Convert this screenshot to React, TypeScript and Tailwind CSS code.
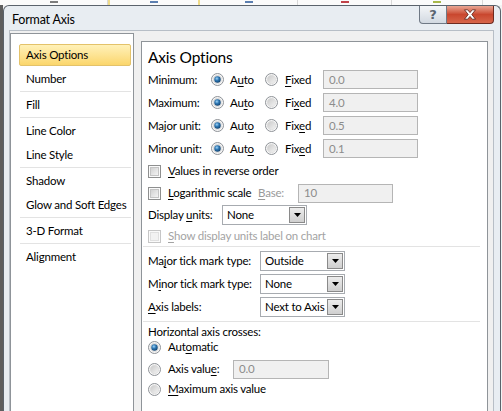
import React from 'react';

// Access key underline
const U: React.FC<{ children: React.ReactNode }> = ({ children }) => (
  <span className="underline underline-offset-[2px] decoration-[1px]">{children}</span>
);

const Radio: React.FC<{ checked?: boolean }> = ({ checked }) => (
  <svg width="13" height="13" viewBox="0 0 13 13" className="shrink-0">
    <defs>
      <linearGradient id="rOff" x1="0" y1="0" x2="1" y2="1">
        <stop offset="0" stopColor="#c9c9c9" />
        <stop offset="1" stopColor="#f4f4f4" />
      </linearGradient>
      <radialGradient id="rDot" cx="0.4" cy="0.35" r="0.7">
        <stop offset="0" stopColor="#9fd4f7" />
        <stop offset="0.45" stopColor="#2f78b4" />
        <stop offset="1" stopColor="#0f3e6a" />
      </radialGradient>
    </defs>
    <circle cx="6.5" cy="6.5" r="6" fill="#f7f7f7" stroke="#8e9297" strokeWidth="1" />
    <circle cx="6.5" cy="6.5" r="4.2" fill="url(#rOff)" stroke="#d6d6d6" strokeWidth="0.6" />
    {checked && <circle cx="6.5" cy="6.5" r="3.2" fill="url(#rDot)" />}
  </svg>
);

const Check: React.FC<{ disabled?: boolean }> = ({ disabled }) => (
  <svg width="13" height="13" viewBox="0 0 13 13" className="shrink-0">
    <defs>
      <linearGradient id="cIn" x1="0" y1="0" x2="1" y2="1">
        <stop offset="0" stopColor="#cfcfcf" />
        <stop offset="1" stopColor="#f6f6f6" />
      </linearGradient>
    </defs>
    <rect x="0.5" y="0.5" width="12" height="12" fill="#fafafa" stroke={disabled ? '#c6c6c6' : '#8e8f8f'} />
    <rect x="2.5" y="2.5" width="8" height="8" fill={disabled ? '#f2f2f2' : 'url(#cIn)'} stroke={disabled ? '#e0e0e0' : '#c4c4c4'} />
  </svg>
);

const Field: React.FC<{ value: string; w: string }> = ({ value, w }) => (
  <div className={`${w} shrink-0 h-[19px] border border-[#b5b5b5] bg-[#f0f0f0] text-[#8c8c8c] pl-[5px] flex items-center`}>
    {value}
  </div>
);

const Select: React.FC<{ value: string }> = ({ value }) => (
  <div className="w-[85px] shrink-0 h-[20px] border border-[#a7abb0] bg-white flex items-center">
    <span className="pl-[4px] flex-1 whitespace-nowrap">{value}</span>
    <div className="w-[16px] h-[16px] mr-[1px] shrink-0 border border-[#8a8a8a] bg-gradient-to-b from-[#ececec] to-[#cfcfcf] flex items-center justify-center">
      <svg width="7" height="4" viewBox="0 0 7 4">
        <path d="M0 0h7L3.5 4z" fill="#000" />
      </svg>
    </div>
  </div>
);

const navGroups: string[][] = [
  ['Axis Options', 'Number'],
  ['Fill'],
  ['Line Color', 'Line Style'],
  ['Shadow', 'Glow and Soft Edges'],
  ['3-D Format'],
  ['Alignment'],
];

const axisRows = [
  { label: 'Minimum:', auto: ['A', 'u', 'to'], fixed: ['', 'F', 'ixed'], value: '0.0' },
  { label: 'Maximum:', auto: ['Au', 't', 'o'], fixed: ['Fi', 'x', 'ed'], value: '4.0' },
  { label: 'Major unit:', auto: ['Aut', 'o', ''], fixed: ['Fix', 'e', 'd'], value: '0.5' },
  { label: 'Minor unit:', auto: ['Aut', 'o', ''], fixed: ['Fix', 'e', 'd'], value: '0.1' },
];

const App: React.FC = () => {
  return (
    <div className="w-[502px] h-[411px] overflow-hidden bg-[#f3f3f3] flex flex-col font-['Lato',sans-serif] text-[11.5px] tracking-[-0.2px] text-black leading-none whitespace-nowrap">
      {/* Excel sheet peeking behind the dialog */}
      <div className="h-[5px] shrink-0 flex bg-[#fbfbfb]">
        <div className="w-[108px] border-r border-[#d8d8d8] flex justify-center"><div className="w-[8px] h-[2px] mt-[1px] bg-[#7d7d7d]" /></div>
        <div className="w-[92px] border-x-2 border-[#f0dc8a] flex justify-center"><div className="w-[8px] h-[2px] mt-[1px] bg-[#5c7fb0]" /></div>
        <div className="w-[98px] border-r border-[#d8d8d8] flex justify-center"><div className="w-[8px] h-[2px] mt-[1px] bg-[#5c7fb0]" /></div>
        <div className="w-[94px] border-r border-[#d8d8d8] flex justify-center"><div className="w-[8px] h-[2px] mt-[1px] bg-[#c0424a]" /></div>
        <div className="w-[91px] border-r border-[#d8d8d8] flex justify-center"><div className="w-[8px] h-[2px] mt-[1px] bg-[#a8b84a]" /></div>
        <div className="flex-1" />
      </div>

      <div className="flex flex-1 min-h-0">
        <div className="w-[3px] shrink-0 bg-[#5e5e5e]" />

        {/* Dialog */}
        <div className="w-[498px] shrink-0 border border-b-0 border-[#5b636c] rounded-t-[6px] bg-[#e8edf2] flex flex-col pl-[5px] pr-[6px]">
          {/* Title bar */}
          <div className="h-[24px] shrink-0 flex items-start">
            <span className="mt-[8px] ml-[3px] text-[12.5px]">Format Axis</span>
            <div className="ml-auto flex">
              <div className="w-[28px] h-[18px] border border-t-0 border-[#6f7985] rounded-bl-[4px] bg-gradient-to-b from-[#f4f6f8] to-[#d2d9e1] flex items-center justify-center text-[13px] font-bold text-[#5a6470] font-['DejaVu_Sans',sans-serif] tracking-normal">
                ?
              </div>
              <div className="w-[47px] h-[18px] border border-l-0 border-t-0 border-[#6d2a20] rounded-br-[4px] bg-gradient-to-b from-[#e8a593] via-[#c9472f] to-[#d7654a] flex items-center justify-center">
                <svg width="14" height="11" viewBox="0 0 14 11">
                  <path
                    d="M1.5 0.8h3.2L7 3.6l2.3-2.8h3.2L8.8 5.5l3.7 4.7H9.3L7 7.4l-2.3 2.8H1.5l3.7-4.7z"
                    fill="#fff"
                    stroke="#5a1f17"
                    strokeWidth="0.8"
                    strokeLinejoin="round"
                  />
                </svg>
              </div>
            </div>
          </div>

          {/* Client area */}
          <div className="flex-1 min-h-0 border border-b-0 border-[#b7bec6] bg-[#f0f0f0] flex gap-[7px] pr-[5px] pt-[2px]">
            {/* Category list */}
            <div className="w-[124px] shrink-0 border border-b-0 border-[#8f9499] bg-white pt-[9px] pl-[8px] pr-[2px]">
              {navGroups.map((group, gi) => (
                <div key={gi}>
                  {gi > 0 && <div className="h-[2px] ml-[1px] border-t border-[#e3e3e3] bg-white" />}
                  {group.map(item =>
                    item === 'Axis Options' ? (
                      <div key={item} className="h-[24px] py-[1px]">
                        <div className="h-full border border-[#e3c26a] rounded-[2px] bg-gradient-to-b from-[#fff1b8] to-[#fbd66b] flex items-center pl-[6px]">
                          {item}
                        </div>
                      </div>
                    ) : (
                      <div key={item} className="h-[24px] flex items-center pl-[7px]">
                        {item}
                      </div>
                    )
                  )}
                </div>
              ))}
            </div>

            {/* Options panel */}
            <div className="flex-1 mt-[8px] border border-b-0 border-[#8f9499] bg-white pl-[6px]">
              <div className="h-[26px] pt-[5px] text-[15.5px] leading-[20px]">Axis Options</div>

              {axisRows.map(r => (
                <div key={r.label} className="h-[23px] flex items-center">
                  <span className="w-[63px] shrink-0">{r.label}</span>
                  <div className="w-[54px] shrink-0 flex items-center gap-[6px]">
                    <Radio checked />
                    <span>{r.auto[0]}<U>{r.auto[1]}</U>{r.auto[2]}</span>
                  </div>
                  <div className="w-[58px] shrink-0 flex items-center gap-[7px]">
                    <Radio />
                    <span>{r.fixed[0]}<U>{r.fixed[1]}</U>{r.fixed[2]}</span>
                  </div>
                  <Field value={r.value} w="w-[95px]" />
                </div>
              ))}

              <div className="h-[22px] flex items-center gap-[7px]">
                <Check />
                <span><U>V</U>alues in reverse order</span>
              </div>
              <div className="h-[22px] flex items-center">
                <Check />
                <span className="w-[90px] shrink-0 ml-[7px]"><U>L</U>ogarithmic scale</span>
                <span className="w-[40px] shrink-0 text-[#9a9a9a]"><U>B</U>ase:</span>
                <Field value="10" w="w-[95px]" />
              </div>
              <div className="h-[22px] flex items-center">
                <span className="w-[74px] shrink-0">Display <U>u</U>nits:</span>
                <Select value="None" />
              </div>
              <div className="h-[20px] flex items-center gap-[7px] text-[#a3a3a3]">
                <Check disabled />
                <span><U>S</U>how display units label on chart</span>
              </div>

              <div className="h-px w-[337px] -ml-[5px] bg-[#e3e3e3]" />

              <div className="mt-[2px] h-[23px] flex items-center">
                <span className="w-[112px] shrink-0">Ma<U>j</U>or tick mark type:</span>
                <Select value="Outside" />
              </div>
              <div className="h-[23px] flex items-center">
                <span className="w-[112px] shrink-0">M<U>i</U>nor tick mark type:</span>
                <Select value="None" />
              </div>
              <div className="h-[23px] flex items-center">
                <span className="w-[112px] shrink-0"><U>A</U>xis labels:</span>
                <Select value="Next to Axis" />
              </div>

              <div className="mt-[3px] h-px w-[337px] -ml-[5px] bg-[#e3e3e3]" />

              <div className="mt-[2px] h-[15px] flex items-center">Horizontal axis crosses:</div>
              <div className="h-[16px] flex items-center gap-[7px]">
                <Radio checked />
                <span>Aut<U>o</U>matic</span>
              </div>
              <div className="mt-[3px] h-[22px] flex items-center">
                <Radio />
                <span className="w-[65px] shrink-0 ml-[7px]">Axis valu<U>e</U>:</span>
                <Field value="0.0" w="w-[96px]" />
              </div>
              <div className="h-[18px] flex items-center gap-[7px]">
                <Radio />
                <span><U>M</U>aximum axis value</span>
              </div>
            </div>
          </div>
        </div>
      </div>
    </div>
  );
};

export default App;
